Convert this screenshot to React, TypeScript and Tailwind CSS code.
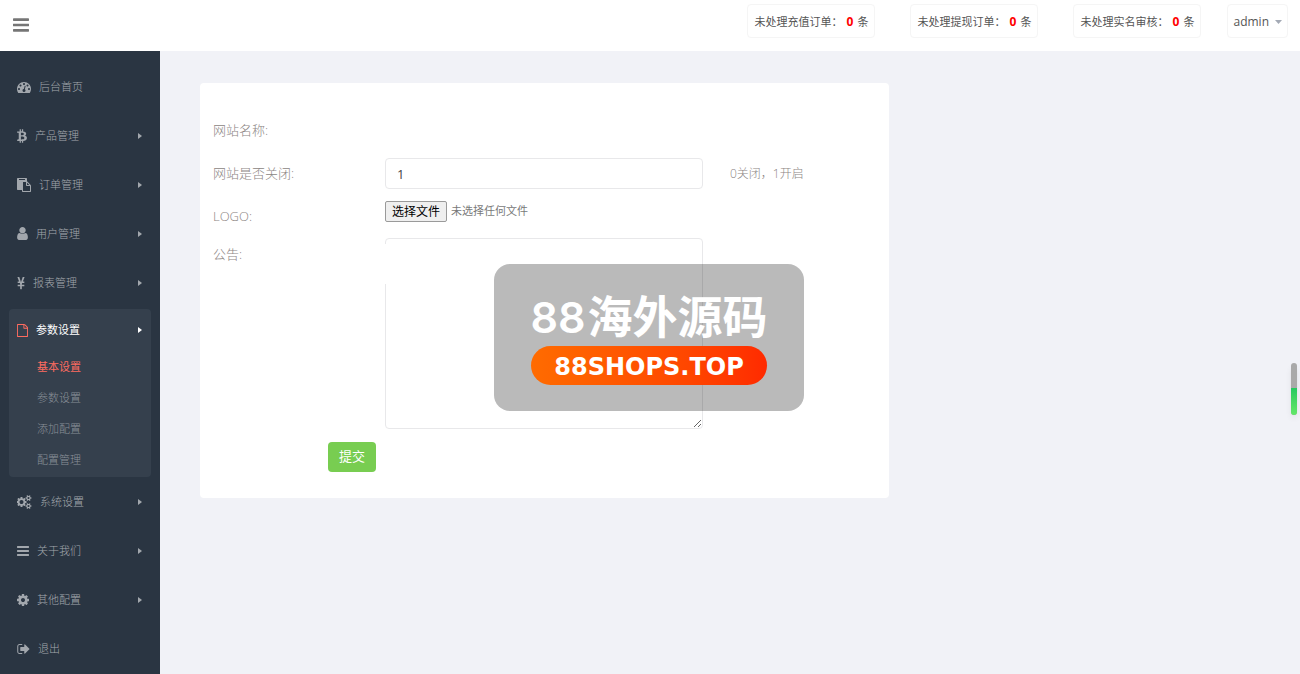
import { useState } from "react";
import type { ReactNode } from "react";
import { FaBtc, FaYenSign } from "react-icons/fa";

const PATHS = {
  bars: "M1664 1344v128q0 26-19 45t-45 19h-1408q-26 0-45-19t-19-45v-128q0-26 19-45t45-19h1408q26 0 45 19t19 45zm0-512v128q0 26-19 45t-45 19h-1408q-26 0-45-19t-19-45v-128q0-26 19-45t45-19h1408q26 0 45 19t19 45zm0-512v128q0 26-19 45t-45 19h-1408q-26 0-45-19t-19-45v-128q0-26 19-45t45-19h1408q26 0 45 19t19 45z",
  dashboard:
    "M384 1152q0-53-37.5-90.5t-90.5-37.5-90.5 37.5-37.5 90.5 37.5 90.5 90.5 37.5 90.5-37.5 37.5-90.5zm192-448q0-53-37.5-90.5t-90.5-37.5-90.5 37.5-37.5 90.5 37.5 90.5 90.5 37.5 90.5-37.5 37.5-90.5zm428 481l101-382q6-26-7.5-48.5t-38.5-29.5-48 6.5-30 39.5l-101 382q-60 5-107 43.5t-63 98.5q-20 77 20 146t117 89 146-20 89-117q16-60-6-117t-72-91zm660-33q0-53-37.5-90.5t-90.5-37.5-90.5 37.5-37.5 90.5 37.5 90.5 90.5 37.5 90.5-37.5 37.5-90.5zm-640-640q0-53-37.5-90.5t-90.5-37.5-90.5 37.5-37.5 90.5 37.5 90.5 90.5 37.5 90.5-37.5 37.5-90.5zm448 192q0-53-37.5-90.5t-90.5-37.5-90.5 37.5-37.5 90.5 37.5 90.5 90.5 37.5 90.5-37.5 37.5-90.5zm320 448q0 261-141 483-19 29-54 29h-1402q-35 0-54-29-141-221-141-483 0-182 71-348t191-286 286-191 348-71 348 71 286 191 191 286 71 348z",
  paste:
    "M768 1664h896v-640h-416q-40 0-68-28t-28-68v-416h-384v1152zm256-1440v-64q0-13-9.5-22.5t-22.5-9.5h-704q-13 0-22.5 9.5t-9.5 22.5v64q0 13 9.5 22.5t22.5 9.5h704q13 0 22.5-9.5t9.5-22.5zm256 672h299l-299-299v299zm512 128v672q0 40-28 68t-68 28h-960q-40 0-68-28t-28-68v-160h-544q-40 0-68-28t-28-68v-1344q0-40 28-68t68-28h1088q40 0 68 28t28 68v328q21 13 36 28l408 408q28 28 48 76t20 88z",
  user: "M1536 1399q0 109-62.5 187t-150.5 78h-854q-88 0-150.5-78t-62.5-187q0-85 8.5-160.5t31.5-152 58.5-131 94-89 134.5-34.5q131 128 313 128t313-128q76 0 134.5 34.5t94 89 58.5 131 31.5 152 8.5 160.5zm-256-887q0 159-112.5 271.5t-271.5 112.5-271.5-112.5-112.5-271.5 112.5-271.5 271.5-112.5 271.5 112.5 112.5 271.5z",
  file: "M1596 380q28 28 48 76t20 88v1152q0 40-28 68t-68 28h-1344q-40 0-68-28t-28-68v-1600q0-40 28-68t68-28h896q40 0 88 20t76 48zm-444-244v376h376q-10-29-22-41l-313-313q-12-12-41-22zm384 1528v-1024h-416q-40 0-68-28t-28-68v-416h-768v1536h1280z",
  cog: "M1152 896q0-106-75-181t-181-75-181 75-75 181 75 181 181 75 181-75 75-181zm512-109v222q0 12-8 23t-20 13l-185 28q-19 54-39 91 35 50 107 138 10 12 10 25t-9 23q-27 37-99 108t-94 71q-12 0-26-9l-138-108q-44 23-91 38-16 136-29 186-7 28-36 28h-222q-14 0-24.5-8.5t-11.5-21.5l-28-184q-49-16-90-37l-141 107q-10 9-25 9-14 0-25-11-126-114-165-168-7-10-7-23 0-12 8-23 15-21 51-66.5t54-70.5q-27-50-41-99l-183-27q-13-2-21-12.5t-8-23.5v-222q0-12 8-23t19-13l186-28q14-46 39-92-40-57-107-138-10-12-10-24 0-10 9-23 26-36 98.5-107.5t94.5-71.5q13 0 26 10l138 107q44-23 91-38 16-136 29-186 7-28 36-28h222q14 0 24.5 8.5t11.5 21.5l28 184q49 16 90 37l142-107q9-9 24-9 13 0 25 10 129 119 165 170 7 8 7 22 0 12-8 23-15 21-51 66.5t-54 70.5q26 50 41 98l183 28q13 2 21 12.5t8 23.5z",
  cogs: "M832 896q0-106-75-181t-181-75-181 75-75 181 75 181 181 75 181-75 75-181zm768 512q0-52-38-90t-90-38-90 38-38 90q0 53 37.5 90.5t90.5 37.5 90.5-37.5 37.5-90.5zm0-1024q0-52-38-90t-90-38-90 38-38 90q0 53 37.5 90.5t90.5 37.5 90.5-37.5 37.5-90.5zm-384 421v185q0 10-7 19.5t-16 10.5l-155 24q-11 35-32 76 34 48 90 115 7 11 7 20 0 12-7 19-23 30-82.5 89.5t-78.5 59.5q-11 0-21-7l-115-90q-37 19-77 31-11 108-23 155-7 24-30 24h-186q-11 0-20-7.5t-10-17.5l-23-153q-34-10-75-31l-118 89q-7 7-20 7-11 0-21-8-144-133-144-160 0-9 7-19 10-14 41-53t47-61q-23-44-35-82l-152-24q-10-1-17-9.5t-7-19.5v-185q0-10 7-19.5t16-10.5l155-24q11-35 32-76-34-48-90-115-7-11-7-20 0-12 7-20 22-30 82-89t79-59q11 0 21 7l115 90q34-18 77-32 11-108 23-154 7-24 30-24h186q11 0 20 7.5t10 17.5l23 153q34 10 75 31l118-89q8-7 20-7 11 0 21 8 144 133 144 160 0 8-7 19-12 16-42 54t-45 60q23 48 34 82l152 23q10 2 17 10.5t7 19.5zm640 533v140q0 16-149 31-12 27-30 52 51 113 51 138 0 4-4 7-122 71-124 71-8 0-46-47t-52-68q-20 2-30 2t-30-2q-14 21-52 68t-46 47q-2 0-124-71-4-3-4-7 0-25 51-138-18-25-30-52-149-15-149-31v-140q0-16 149-31 13-29 30-52-51-113-51-138 0-4 4-7 4-2 35-20t59-34 30-16q8 0 46 46.5t52 67.5q20-2 30-2t30 2q51-71 92-112l6-2q4 0 124 70 4 3 4 7 0 25-51 138 17 23 30 52 149 15 149 31zm0-1024v140q0 16-149 31-12 27-30 52 51 113 51 138 0 4-4 7-122 71-124 71-8 0-46-47t-52-68q-20 2-30 2t-30-2q-14 21-52 68t-46 47q-2 0-124-71-4-3-4-7 0-25 51-138-18-25-30-52-149-15-149-31v-140q0-16 149-31 13-29 30-52-51-113-51-138 0-4 4-7 4-2 35-20t59-34 30-16q8 0 46 46.5t52 67.5q20-2 30-2t30 2q51-71 92-112l6-2q4 0 124 70 4 3 4 7 0 25-51 138 17 23 30 52 149 15 149 31z",
  signOut:
    "M704 1440q0 4 1 20t.5 26.5-3 23.5-10 19.5-20.5 6.5h-320q-119 0-203.5-84.5t-84.5-203.5v-704q0-119 84.5-203.5t203.5-84.5h320q13 0 22.5 9.5t9.5 22.5q0 4 1 20t.5 26.5-3 23.5-10 19.5-20.5 6.5h-320q-66 0-113 47t-47 113v704q0 66 47 113t113 47h312l11.5 1 11.5 3 8 5.5 7 9 2 13.5zm928-544q0 26-19 45l-544 544q-19 19-45 19t-45-19-19-45v-288h-448q-26 0-45-19t-19-45v-384q0-26 19-45t45-19h448v-288q0-26 19-45t45-19 45 19l544 544q19 19 19 45z",
};

function Icon({ d, box, className }: { d: string; box: string; className: string }) {
  return (
    <svg viewBox={box} className={className} fill="currentColor" aria-hidden="true">
      <path d={d} />
    </svg>
  );
}

type Item = { label: string; icon: ReactNode; arrow: boolean };

const topItems: Item[] = [
  { label: "后台首页", icon: <Icon d={PATHS.dashboard} box="0 0 1792 1792" className="w-3.5 h-3.5" />, arrow: false },
  { label: "产品管理", icon: <FaBtc className="w-2.5 h-3.5" />, arrow: true },
  { label: "订单管理", icon: <Icon d={PATHS.paste} box="0 0 1792 1792" className="w-3.5 h-3.5" />, arrow: true },
  { label: "用户管理", icon: <Icon d={PATHS.user} box="256 0 1280 1792" className="w-[11px] h-[15px]" />, arrow: true },
  { label: "报表管理", icon: <FaYenSign className="w-2 h-3.5" preserveAspectRatio="none" />, arrow: true },
];

const bottomItems: Item[] = [
  { label: "系统设置", icon: <Icon d={PATHS.cogs} box="0 0 1920 1792" className="w-[15px] h-3.5" />, arrow: true },
  { label: "关于我们", icon: <Icon d={PATHS.bars} box="128 128 1536 1536" className="w-3 h-3" />, arrow: true },
  { label: "其他配置", icon: <Icon d={PATHS.cog} box="128 0 1536 1792" className="w-3 h-3.5" />, arrow: true },
  { label: "退出", icon: <Icon d={PATHS.signOut} box="64 0 1600 1792" className="w-[13px] h-3.5" />, arrow: false },
];

const subItems = ["基本设置", "参数设置", "添加配置", "配置管理"];

function Caret() {
  return (
    <svg viewBox="0 0 4 6" className="mb-0.5 ml-auto h-1.5 w-1" fill="currentColor" aria-hidden="true">
      <path d="M0 0l4 3-4 3z" />
    </svg>
  );
}

function NavRow({ item }: { item: Item }) {
  return (
    <li>
      <a href="#" className="flex h-[49px] items-center gap-2 pr-[18px] pl-[17px] hover:text-white">
        <span className="pb-0.5">{item.icon}</span>
        <span>{item.label}</span>
        {item.arrow && <Caret />}
      </a>
    </li>
  );
}

function Sidebar() {
  return (
    <nav className="w-40 shrink-0 bg-[#2a3542] pt-3 text-[11px] font-light text-[#a2a7ad]">
      <ul>
        {topItems.map((item) => (
          <NavRow key={item.label} item={item} />
        ))}
        <li className="mx-[9px] my-px rounded bg-[#35404d] pb-px">
          <a href="#" className="flex h-[43px] items-center gap-2 pr-[9px] pl-2 font-normal text-white">
            <Icon d={PATHS.file} box="128 0 1536 1792" className="h-[13px] w-[11px] text-[#ff6c60]" />
            <span>参数设置</span>
            <Caret />
          </a>
          <ul>
            {subItems.map((label, i) => (
              <li key={label}>
                <a
                  href="#"
                  className={
                    i === 0
                      ? "flex h-[31px] items-center pl-7 font-normal text-[#ff6c60]"
                      : "flex h-[31px] items-center pl-7 text-[#8a9099]"
                  }
                >
                  {label}
                </a>
              </li>
            ))}
          </ul>
        </li>
        {bottomItems.map((item) => (
          <NavRow key={item.label} item={item} />
        ))}
      </ul>
    </nav>
  );
}

function Counter({ label }: { label: string }) {
  return (
    <a href="#" className="flex h-[34px] w-32 items-center justify-center rounded border border-[#f5f5f5] pt-0.5 text-[11px] whitespace-nowrap text-[#555]">
      {label}：<b className="mr-1 ml-1 text-xs font-bold text-[#f00]">0</b>条
    </a>
  );
}

function Header() {
  return (
    <header className="flex h-[51px] items-start justify-between bg-white pr-3 pl-[13px]">
      <button type="button" aria-label="切换菜单" className="pt-[17px] text-[#767676]">
        <Icon d={PATHS.bars} box="128 256 1536 1280" className="h-4 w-4" />
      </button>
      <div className="flex items-center gap-[35px] pt-1">
        <Counter label="未处理充值订单" />
        <Counter label="未处理提现订单" />
        <div className="flex gap-[26px]">
          <Counter label="未处理实名审核" />
          <button type="button" className="flex h-[34px] items-center gap-1.5 rounded border border-[#f5f5f5] px-[5px] pt-0.5 text-xs text-[#555]">
            admin
            <svg viewBox="0 0 7 4" className="h-1 w-[7px]" fill="#a4aab5" aria-hidden="true">
              <path d="M0 0h7l-3.5 4z" />
            </svg>
          </button>
        </div>
      </div>
    </header>
  );
}

function Watermark() {
  return (
    <div className="pointer-events-none absolute top-[181px] left-[294px] flex h-[147px] w-[310px] flex-col items-center rounded-2xl bg-black/27 pt-[22px] text-white">
      <div className="flex h-[60px] items-start gap-0.5 whitespace-nowrap">
        <span className="font-['Inter'] text-[43px] leading-[62px] font-semibold">88</span>
        <span className="font-['Noto_Sans_CJK_SC'] text-[45px] leading-[58px] font-bold">海外源码</span>
      </div>
      <div className="flex h-[39px] w-[236px] items-center justify-center rounded-full bg-linear-to-r from-[#ff6b00] to-[#ff2a00] pt-0.5 font-['DejaVu_Sans'] text-2xl font-bold">
        88SHOPS.TOP
      </div>
    </div>
  );
}

function SettingsForm() {
  const [open, setOpen] = useState("1");
  const [notice, setNotice] = useState("");
  return (
    <form
      className="relative w-full max-w-[689px] rounded bg-white px-[13px] pt-[26px] pb-[26px] text-[13px] font-light text-[#8c8583]"
      onSubmit={(e) => e.preventDefault()}
    >
      <div className="grid grid-cols-[172px_318px_1fr]">
        <div className="flex h-[43px] items-center">网站名称:</div>
        <div className="col-span-2" />

        <label htmlFor="site-open" className="flex h-[43px] items-center">
          网站是否关闭:
        </label>
        <div className="flex h-[43px] items-center">
          <input
            id="site-open"
            value={open}
            onChange={(e) => setOpen(e.target.value)}
            className="h-[31px] w-full rounded border border-[#e8e8ea] px-[11px] text-[13px] font-normal text-[#444] outline-none"
          />
        </div>
        <div className="flex h-[43px] items-center pl-[27px] text-xs">0关闭，1开启</div>

        <label htmlFor="logo" className="flex h-[43px] items-center">
          LOGO:
        </label>
        <div className="col-span-2 flex h-[33px] items-center gap-1 text-xs font-normal">
          <input id="logo" type="file" className="sr-only" />
          <label
            htmlFor="logo"
            className="flex h-[21px] items-center rounded-xs border border-[#9a9a9a] bg-[#efefef] px-[6px] text-black"
          >
            选择文件
          </label>
          <span className="text-[11px] text-[#797979]">未选择任何文件</span>
        </div>

        <label htmlFor="notice" className="flex h-[33px] items-center">
          公告:
        </label>
        <div className="relative">
          <textarea
            id="notice"
            value={notice}
            onChange={(e) => setNotice(e.target.value)}
            className="block h-[191px] w-full rounded border border-[#e8e8ea] px-3 py-1.5 text-sm outline-none"
          />
          <span className="absolute top-1.5 left-0 h-10 w-1 bg-white" />
        </div>
      </div>
      <button
        type="submit"
        className="mt-[13px] ml-[115px] flex h-[30px] w-12 items-center justify-center rounded bg-[#78cd51] text-[13px] font-normal text-white"
      >
        提交
      </button>
      <Watermark />
    </form>
  );
}

export default function App() {
  return (
    <div className="flex min-h-screen flex-col bg-[#f1f2f7] font-['Open_Sans','Noto_Sans_CJK_SC',sans-serif]">
      <Header />
      <div className="flex flex-1">
        <Sidebar />
        <main className="min-w-0 flex-1 px-10 pt-8">
          <SettingsForm />
        </main>
      </div>
      <div className="fixed top-[363px] right-[3px] flex h-[52px] w-1.5 flex-col overflow-hidden rounded-full bg-[#a9a9a9] shadow-md" aria-hidden="true">
        <div className="mt-auto h-[27px] bg-linear-to-b from-[#23c960] to-[#62e868]" />
      </div>
    </div>
  );
}
